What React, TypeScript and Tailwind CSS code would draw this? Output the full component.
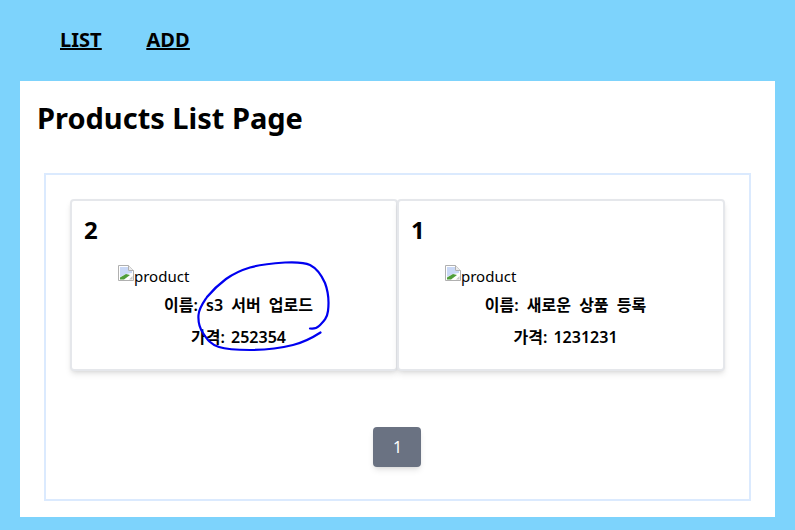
const products = [
  { id: 2, name: 's3 서버 업로드', price: 252354 },
  { id: 1, name: '새로운 상품 등록', price: 1231231 },
];

function BrokenImage() {
  return (
    <svg width="16" height="16" viewBox="0 0 16 16" className="shrink-0 mt-[1px]">
      <path d="M0.5 0.5H10.5L15.5 5.5V15.5H0.5Z" fill="#ffffff" stroke="#b0b0b0" />
      <path d="M10.5 0.5V5.5H15.5" fill="#ececec" stroke="#b0b0b0" />
      <path d="M2 2H10V6H14V8L8 9L2 12Z" fill="#c9d8f6" />
      <path d="M2 14.500V12.500L8 9L12 10L6 14.500Z" fill="#4f9d3a" />
      <path d="M11 14.500L14.500 11V14.500Z" fill="#c8c8c8" />
    </svg>
  );
}

function ProductCard({ id, name, price }: { id: number; name: string; price: number }) {
  return (
    <div className="w-[328px] h-[172px] border-2 border-gray-200 rounded shadow-md bg-white -mr-px">
      <div className="pl-[12px] pt-[13px] text-[24px] leading-[32px] font-bold">{id}</div>
      <div className="flex items-start pl-[46px] mt-[18px] h-[22px] text-[15px] leading-[24px]">
        <BrokenImage />
        <span>product</span>
      </div>
      <div className="pl-[9px] mt-[7px] text-center text-[16px] leading-[24px] font-semibold [word-spacing:4px]">이름: {name}</div>
      <div className="pl-[9px] mt-[8px] text-center text-[16px] leading-[24px] font-semibold [word-spacing:2px]">가격: {price}</div>
    </div>
  );
}

export default function App() {
  return (
    <div className="relative h-[530px] overflow-hidden bg-[#7dd3fc] text-black font-['Noto_Sans','Noto_Sans_CJK_KR',sans-serif]">
      {/* nav */}
      <nav className="h-[81px] flex items-center gap-[45px] pl-[60px] pb-[2px] text-[20px] font-bold underline">
        <a>LIST</a>
        <a>ADD</a>
      </nav>

      <main className="mx-[20px] h-[436px] bg-white pt-[15px] px-[24px]">
        <h1 className="-ml-[7px] text-[29px] leading-[44px] font-bold">Products List Page</h1>
        <div className="mt-[33px] h-[328px] border-2 border-blue-100 pt-[24px] pl-[24px]">
          <div className="flex">
            {products.map((p) => (
              <ProductCard key={p.id} {...p} />
            ))}
          </div>
          <div className="flex justify-center mt-[56px] pr-[26px]">
            <button className="w-[48px] h-[40px] rounded bg-gray-500 text-white text-[16px] shadow-md pl-[2px]">1</button>
          </div>
        </div>
      </main>

      {/* pen scribble over the screenshot */}
      <svg className="absolute left-0 top-0 pointer-events-none" width="795" height="530" fill="none">
        <path
          d="M310 328.5C314 329 317 328 319 326C323 322 327 319 328 311C329 303 328 291 325 283C321 274 316 268 310 265C304 262 296 262 285 262.500C272 263.500 258 265 250 267.500C240 270.500 233 274 226 279C218 285 212 291 207 297C203 303 199 308 198.500 315C198 322 199 327 203 333C207 339 210 344 219 347C228 350 238 350 250 350C265 350 281 348 293 345C303 342.500 312 338 320.500 332.500"
          stroke="#0000f0"
          strokeWidth="2.2"
          strokeLinecap="round"
        />
      </svg>
    </div>
  );
}
